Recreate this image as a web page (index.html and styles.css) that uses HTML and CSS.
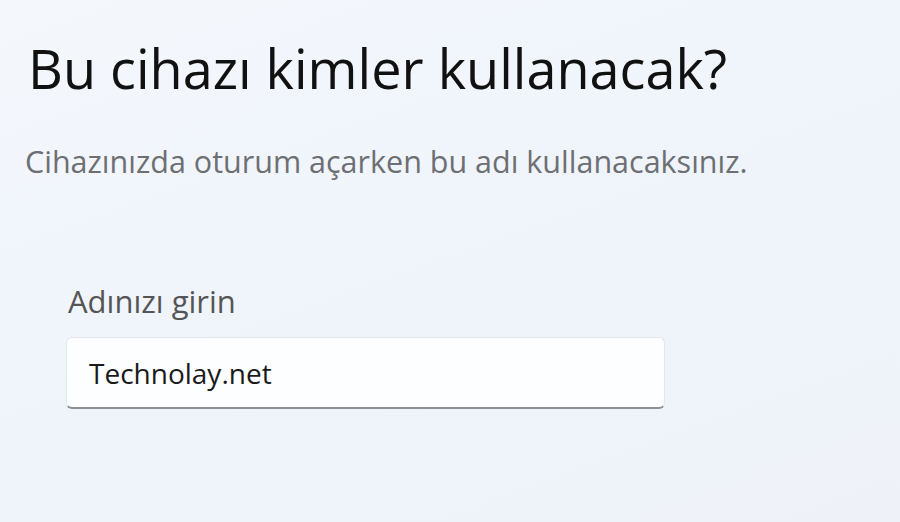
FILE: index.html
```html
<!DOCTYPE html>
<html lang="tr">
<head>
<meta charset="utf-8">
<link rel="stylesheet" href="styles.css">
</head>
<body>
<main class="page">
  <h1 class="title">Bu cihazı kimler kullanacak?</h1>
  <p class="subtitle">Cihazınızda oturum açarken bu adı kullanacaksınız.</p>
  <div class="field">
    <label class="label" for="name">Adınızı girin</label>
    <div class="input" id="name">Technolay.net</div>
  </div>
</main>
</body>
</html>
```
FILE: styles.css
```css
html, body {
  margin: 0;
  height: 100%;
}
body {
  background: linear-gradient(160deg, #f4f8fd 0%, #eff4fb 50%, #eef2f8 100%);
  font-family: "Open Sans", "Noto Sans", sans-serif;
  overflow: hidden;
}
.page {
  padding: 30px 0 0 28px;
  display: flex;
  flex-direction: column;
}
.title {
  margin: 0;
  font-weight: 400;
  font-size: 54px;
  line-height: 76px;
  color: #111;
}
.subtitle {
  margin: 35px 0 0 -3px;
  font-size: 30.5px;
  line-height: 40px;
  color: #6d6f72;
}
.field {
  margin: 100px 0 0 38px;
  display: flex;
  flex-direction: column;
}
.label {
  padding-left: 2px;
  font-size: 31px;
  line-height: 40px;
  color: #555;
}
.input {
  margin-top: 16px;
  width: 599px;
  height: 72px;
  box-sizing: border-box;
  padding: 0 22px;
  display: flex;
  align-items: center;
  background: #fdfeff;
  border: 1px solid #e4e7ea;
  border-bottom: 2px solid #8c8f94;
  border-radius: 6px;
  font-size: 28px;
  color: #1a1a1a;
}
```
